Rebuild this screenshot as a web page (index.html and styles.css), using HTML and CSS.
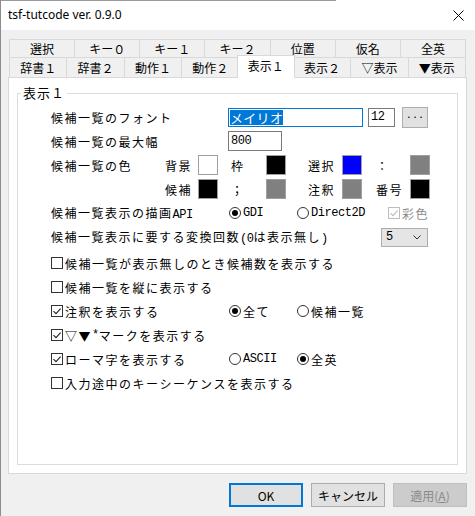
FILE: index.html
```html
<!DOCTYPE html>
<html lang="ja">
<head>
<meta charset="utf-8">
<title>tsf-tutcode</title>
<link rel="stylesheet" href="styles.css">
</head>
<body>
<div class="window">
  <div class="titlebar">
    <span class="title">tsf-tutcode ver. 0.9.0</span>
    <svg class="close" viewBox="0 0 11 11"><path d="M0.5 0.5L10.5 10.5M10.5 0.5L0.5 10.5" stroke="#000" stroke-width="1" fill="none"/></svg>
  </div>
  <div class="content">
    <div class="tabs">
      <div class="tabrow row1">
        <div class="tab">選択</div>
        <div class="tab">キー０</div>
        <div class="tab">キー１</div>
        <div class="tab">キー２</div>
        <div class="tab">位置</div>
        <div class="tab">仮名</div>
        <div class="tab">全英</div>
      </div>
      <div class="tabrow row2">
        <div class="tab">辞書１</div>
        <div class="tab">辞書２</div>
        <div class="tab">動作１</div>
        <div class="tab">動作２</div>
        <div class="tab active">表示１</div>
        <div class="tab">表示２</div>
        <div class="tab">▽表示</div>
        <div class="tab">▼表示</div>
      </div>
    </div>
    <div class="panel">
      <fieldset class="group">
        <legend>表示１</legend>

        <div class="row">
          <span class="lbl">候補一覧のフォント</span>
          <span class="fontbox"><span class="sel">メイリオ</span></span>
          <span class="sizebox mono">12</span>
          <span class="dots">···</span>
        </div>

        <div class="row">
          <span class="lbl">候補一覧の最大幅</span>
          <span class="widthbox mono">800</span>
        </div>

        <div class="row">
          <span class="lbl-color">候補一覧の色</span>
          <span class="cl c1">背景</span><span class="sw white"></span>
          <span class="cl c2">枠</span><span class="sw black"></span>
          <span class="cl c3">選択</span><span class="sw blue"></span>
          <span class="cl c4">：</span><span class="sw gray"></span>
        </div>

        <div class="row">
          <span class="lbl-color"></span>
          <span class="cl c1">候補</span><span class="sw black"></span>
          <span class="cl c2">；</span><span class="sw gray"></span>
          <span class="cl c3">注釈</span><span class="sw gray"></span>
          <span class="cl c4">番号</span><span class="sw black"></span>
        </div>

        <div class="row">
          <span class="lbl">候補一覧表示の描画<span class="mono">API</span></span>
          <span class="opt opt-a"><span class="rb on"></span><span class="mono">GDI</span></span>
          <span class="opt opt-b"><span class="rb"></span><span class="mono">Direct2D</span></span>
          <span class="opt disabled"><span class="cb dis"><svg viewBox="0 0 12 12"><path d="M2.5 6.2L5 8.6L9.6 3.6" stroke="#bcbcbc" stroke-width="1.1" fill="none"/></svg></span>彩色</span>
        </div>

        <div class="row">
          <span class="lbl-wide">候補一覧表示に要する変換回数<span class="mono">(0</span>は表示無し<span class="mono">)</span></span>
          <span class="combo"><span class="mono">5</span><svg class="chev" viewBox="0 0 8 5"><path d="M0.5 0.5L4 4L7.5 0.5" stroke="#333" stroke-width="1" fill="none"/></svg></span>
        </div>

        <div class="row first-check">
          <span class="chk"><span class="cb"></span>候補一覧が表示無しのとき候補数を表示する</span>
        </div>

        <div class="row">
          <span class="chk"><span class="cb"></span>候補一覧を縦に表示する</span>
        </div>

        <div class="row">
          <span class="chk lbl"><span class="cb"><svg viewBox="0 0 12 12"><path d="M2.5 6.2L5 8.6L9.6 3.6" stroke="#222" stroke-width="1.1" fill="none"/></svg></span>注釈を表示する</span>
          <span class="opt opt-a"><span class="rb on"></span>全て</span>
          <span class="opt"><span class="rb"></span>候補一覧</span>
        </div>

        <div class="row">
          <span class="chk"><span class="cb"><svg viewBox="0 0 12 12"><path d="M2.5 6.2L5 8.6L9.6 3.6" stroke="#222" stroke-width="1.1" fill="none"/></svg></span>▽▼<span class="mono">*</span>マークを表示する</span>
        </div>

        <div class="row">
          <span class="chk lbl"><span class="cb"><svg viewBox="0 0 12 12"><path d="M2.5 6.2L5 8.6L9.6 3.6" stroke="#222" stroke-width="1.1" fill="none"/></svg></span>ローマ字を表示する</span>
          <span class="opt opt-a"><span class="rb"></span><span class="mono">ASCII</span></span>
          <span class="opt"><span class="rb on"></span>全英</span>
        </div>

        <div class="row">
          <span class="chk"><span class="cb"></span>入力途中のキーシーケンスを表示する</span>
        </div>
      </fieldset>
    </div>
    <div class="buttons">
      <span class="btn default">OK</span>
      <span class="btn">キャンセル</span>
      <span class="btn disabled">適用(<u>A</u>)</span>
    </div>
  </div>
</div>
</body>
</html>
```

FILE: styles.css
```css
* { box-sizing: border-box; }
html, body { margin: 0; padding: 0; }
body {
  width: 475px;
  height: 516px;
  overflow: hidden;
  background: #f0f0f0;
  font-family: "Noto Sans CJK JP", sans-serif;
  color: #000;
}
.window {
  width: 475px;
  height: 516px;
  border-left: 1px solid #8c8c8c;
  background: #f0f0f0;
  display: flex;
  flex-direction: column;
}
.titlebar {
  height: 30px;
  flex: none;
  display: flex;
  align-items: center;
  justify-content: space-between;
  padding: 0 11px 0 7px;
  background: linear-gradient(#9a9a9a, #9a9a9a) 0 0 / 335px 1px no-repeat, #fff;
}
.title {
  font-family: "Noto Sans", sans-serif;
  font-size: 12px;
  line-height: 16px;
}
.close { width: 11px; height: 11px; display: block; }

.content {
  flex: 1;
  display: flex;
  flex-direction: column;
  padding: 0 8px 0 7px;
}

/* tabs */
.tabs { margin: 9px 1px 0; }
.tabrow { display: flex; }
.tab {
  flex: 1;
  height: 18px;
  border: 1px solid #d9d9d9;
  border-right: none;
  border-bottom: none;
  background: #f0f0f0;
  font-size: 12px;
  line-height: 17px;
  text-align: center;
  white-space: nowrap;
}
.tab:last-child { border-right: 1px solid #d9d9d9; }
.row2 .tab { height: 20px; line-height: 19px; }
.row2 .tab.active {
  position: relative;
  z-index: 1;
  height: 23px;
  margin: -2px -2px -1px;
  background: #fff;
  border-right: 1px solid #d9d9d9;
  line-height: 19px;
}

/* panel */
.panel {
  height: 397px;
  flex: none;
  background: #fff;
  border: 1px solid #d9d9d9;
  display: flex;
  flex-direction: column;
  padding: 7px 8px 8px 8px;
}
.group {
  flex: 1;
  margin: 0;
  min-width: 0;
  border: 1px solid #dcdcdc;
  padding: 4px 0 0 33px;
  font-family: "Noto Sans Mono CJK JP", "Noto Sans CJK JP", sans-serif;
  font-size: 12px;
  letter-spacing: 1.5px;
}
.group legend {
  margin-left: -30px;
  padding: 0 2px;
  font-size: 13px;
  line-height: 16px;
  letter-spacing: 1px;
}
.mono {
  font-family: "Liberation Mono", monospace;
  font-size: 12px;
  letter-spacing: -0.45px;
}

.row {
  display: flex;
  align-items: center;
  height: 24px;
  white-space: nowrap;
}
.row.first-check { margin-top: 2px; }
.lbl { width: 177px; flex: none; }
.lbl-wide { width: 330px; flex: none; }
.lbl-color { width: 114px; flex: none; }

.fontbox {
  width: 135px;
  height: 19px;
  border: 1px solid #0078d7;
  padding: 1px;
  display: flex;
  align-items: center;
}
.sel {
  background: #0078d7;
  color: #fff;
  font-family: "Noto Sans CJK JP", sans-serif;
  font-size: 13px;
  line-height: 15px;
  letter-spacing: 0.3px;
}
.sizebox {
  margin-left: 5px;
  width: 27px;
  height: 19px;
  border: 1px solid #7a7a7a;
  padding-left: 2px;
  line-height: 17px;
}
.dots {
  margin-left: 7px;
  width: 26px;
  height: 21px;
  border: 1px solid #adadad;
  background: #e1e1e1;
  font-size: 11px;
  letter-spacing: 0;
  text-align: center;
  line-height: 17px;
}
.widthbox {
  width: 54px;
  height: 20px;
  border: 1px solid #7a7a7a;
  padding-left: 2px;
  line-height: 18px;
}

/* colour swatches */
.cl { flex: none; }
.c1 { width: 33px; }
.c2 { width: 48px; padding-left: 13px; }
.c3 { width: 56px; padding-left: 22px; }
.c4 { width: 48px; padding-left: 14px; }
.sw {
  width: 20px;
  height: 20px;
  flex: none;
  border: 1px solid #a0a0a0;
}
.sw.white { background: #fff; }
.sw.black { background: #000; }
.sw.blue { background: #0000ff; }
.sw.gray { background: #808080; }

/* options */
.opt { display: flex; align-items: center; flex: none; }
.opt-a { width: 68px; }
.opt-b { width: 92px; }
.opt.disabled { color: #8a8a8a; }
.rb {
  width: 12px;
  height: 12px;
  border: 1px solid #333;
  border-radius: 50%;
  margin: 0 2px 0 1px;
  display: flex;
  align-items: center;
  justify-content: center;
  flex: none;
  background: #fff;
}
.rb.on::after {
  content: "";
  width: 6px;
  height: 6px;
  border-radius: 50%;
  background: #000;
}
.chk { display: flex; align-items: center; }
.cb {
  width: 12px;
  height: 12px;
  border: 1px solid #333;
  background: #fff;
  margin-right: 2px;
  flex: none;
  position: relative;
}
.cb svg {
  position: absolute;
  left: -1px;
  top: -1px;
  width: 12px;
  height: 12px;
}
.cb.dis { border-color: #bcbcbc; }

.combo {
  width: 47px;
  height: 19px;
  border: 1px solid #adadad;
  background: #e5e5e5;
  display: flex;
  align-items: center;
  justify-content: space-between;
  padding: 0 6px 0 4px;
}
.chev { width: 8px; height: 5px; display: block; }

/* buttons */
.buttons {
  display: flex;
  justify-content: flex-end;
  gap: 8px;
  margin-top: 9px;
}
.btn {
  width: 74px;
  height: 24px;
  border: 1px solid #adadad;
  background: #e1e1e1;
  font-size: 12px;
  display: flex;
  align-items: center;
  justify-content: center;
}
.btn.default { border: 2px solid #0078d7; }
.btn.disabled {
  background: #cccccc;
  border-color: #bfbfbf;
  color: #8a8a8a;
}
```
